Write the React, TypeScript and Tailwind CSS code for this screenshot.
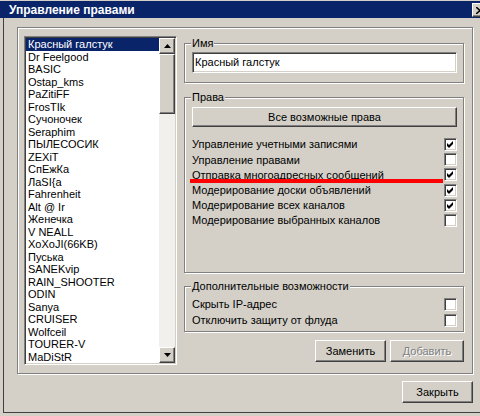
import React from "react";

// classic 3d edges
const raised =
  "border border-t-white border-l-white border-r-[#404040] border-b-[#404040] shadow-[inset_-1px_-1px_0_#808080]";
const sunken =
  "border border-t-[#808080] border-l-[#808080] border-r-white border-b-white shadow-[inset_1px_1px_0_#404040,inset_-1px_-1px_0_#d4d0c8]";
const etched = "border border-[#808080] shadow-[inset_1px_1px_0_#fff,1px_1px_0_#fff]";

const USERS = [
  "Красный галстук",
  "Dr Feelgood",
  "BASIC",
  "Ostap_kms",
  "PaZitiFF",
  "FrosTIk",
  "Сучоночек",
  "Seraphim",
  "ПЫЛЕСОСИК",
  "ZEXiT",
  "СпЕжКа",
  "ЛаSI{а",
  "Fahrenheit",
  "Alt @ Ir",
  "Женечка",
  "V NEALL",
  "XoXoJI(66KB)",
  "Пуська",
  "SANEKvip",
  "RAIN_SHOOTER",
  "ODIN",
  "Sanya",
  "CRUISER",
  "Wolfceil",
  "TOURER-V",
  "MaDiStR",
];

const RIGHTS = [
  { label: "Управление учетными записями", on: true },
  { label: "Управление правами", on: false },
  { label: "Отправка многоадресных сообщений", on: true },
  { label: "Модерирование доски объявлений", on: true },
  { label: "Модерирование всех каналов", on: true },
  { label: "Модерирование выбранных каналов", on: false },
];

const EXTRAS = [
  { label: "Скрыть IP-адрес", on: false },
  { label: "Отключить защиту от флуда", on: false },
];

function Check({ on }: { on: boolean }) {
  return (
    <div className={`w-[13px] h-[13px] bg-white p-px flex items-center justify-center shrink-0 ${sunken}`}>
      {on && (
        <svg width="7" height="7" viewBox="0 0 7 7">
          <path d="M0 2 L2 4 L6 0 L6 3 L2 7 L0 5 Z" fill="#000" />
        </svg>
      )}
    </div>
  );
}

function Arrow({ down }: { down?: boolean }) {
  return (
    <svg width="7" height="4" viewBox="0 0 7 4">
      <path d={down ? "M0 0 H7 L3.5 4 Z" : "M3.5 0 L7 4 H0 Z"} fill="#000" />
    </svg>
  );
}

function Group({
  title,
  className,
  children,
}: {
  title: string;
  className?: string;
  children?: React.ReactNode;
}) {
  return (
    <div className={`relative ${etched} ${className ?? ""}`}>
      <span className="absolute left-[6px] -top-[7px] bg-[#d4d0c8] px-px leading-[12px]">{title}</span>
      {children}
    </div>
  );
}

function Button({
  children,
  className,
  disabled,
}: {
  children: React.ReactNode;
  className?: string;
  disabled?: boolean;
}) {
  return (
    <div
      className={`flex items-center justify-center bg-[#d4d0c8] ${raised} ${
        disabled ? "text-[#808080] [text-shadow:1px_1px_0_#fff]" : ""
      } ${className ?? ""}`}
    >
      {children}
    </div>
  );
}

function ListBox() {
  return (
    <div className={`w-[153px] h-[329px] bg-white p-px flex shrink-0 ${sunken}`}>
      <div className="flex-1 flex flex-col overflow-hidden">
        {USERS.map((name, i) => (
          <div
            key={name}
            className={`h-[12.5px] leading-[12.5px] pl-[2px] whitespace-nowrap ${
              i === 0 ? "bg-[#0a246a] text-white" : ""
            }`}
          >
            {name}
          </div>
        ))}
      </div>
      <div className="w-[16px] flex flex-col bg-[#f1f0ec]">
        <div className={`h-[16px] flex items-center justify-center bg-[#d4d0c8] ${raised}`}>
          <Arrow />
        </div>
        <div className={`h-[60px] bg-[#d4d0c8] ${raised}`} />
        <div className="flex-1" />
        <div className={`h-[16px] flex items-center justify-center bg-[#d4d0c8] ${raised}`}>
          <Arrow down />
        </div>
      </div>
    </div>
  );
}

export default function App() {
  return (
    <div className="w-[480px] h-[416px] bg-[#d4d0c8] overflow-hidden flex flex-col font-['Liberation_Sans',Arial,sans-serif] text-[11px] text-black">
      {/* title bar */}
      <div className="mt-px h-[17px] bg-[#0a246a] flex items-center pl-[9px] shrink-0">
        <span className="text-white font-bold text-[12px] leading-none">Управление правами</span>
        <div
          className={`ml-auto mr-[-8px] self-start mt-[2px] w-[16px] h-[14px] bg-[#d4d0c8] flex items-center justify-center ${raised}`}
        >
          <svg width="8" height="7" viewBox="0 0 8 7">
            <path d="M0 0 L8 7 M8 0 L0 7" stroke="#000" strokeWidth="1.6" />
          </svg>
        </div>
      </div>

      <div className="ml-[3px] h-[395px] border-l border-b border-[#404040] flex flex-col">
        {/* main panel */}
        <div className={`ml-[13px] mt-[9px] w-[456px] h-[347px] pl-[6px] pt-[8px] flex items-start gap-[7px] ${etched}`}>
          <ListBox />

          <div className="w-[280px] mt-[7px] flex flex-col">
            <Group title="Имя" className="h-[40px] pl-[7px] pt-[8px]">
              <div className={`w-[265px] h-[21px] bg-white p-px pl-[2px] flex items-center ${sunken}`}>
                Красный галстук
              </div>
            </Group>

            <Group title="Права" className="mt-[14px] h-[176px] pl-[7px] pr-[6px] pt-[9px]">
              <Button className="w-[265px] h-[20px]">Все возможные права</Button>
              <div className="relative mt-[10px] flex flex-col">
                {RIGHTS.map((r) => (
                  <div key={r.label} className="h-[15.2px] flex items-center justify-between">
                    <span>{r.label}</span>
                    <Check on={r.on} />
                  </div>
                ))}
                {/* red strike under the third right */}
                <div className="absolute left-[-2px] top-[42px] w-[253px] h-[4px] bg-[#f00]" />
              </div>
            </Group>

            <Group title="Дополнительные возможности" className="mt-[13px] h-[46px] pl-[7px] pr-[6px] pt-[9px]">
              {EXTRAS.map((r) => (
                <div key={r.label} className="h-[16px] flex items-center justify-between">
                  <span>{r.label}</span>
                  <Check on={r.on} />
                </div>
              ))}
            </Group>

            <div className="mt-[8px] flex justify-end gap-[4px]">
              <Button className="w-[71px] h-[22px]">Заменить</Button>
              <Button className="w-[74px] h-[22px]" disabled>
                Добавить
              </Button>
            </div>
          </div>
        </div>

        <div className="ml-[13px] mt-[7px] w-[456px] flex justify-end">
          <Button className="w-[71px] h-[22px]">Закрыть</Button>
        </div>
      </div>
    </div>
  );
}
